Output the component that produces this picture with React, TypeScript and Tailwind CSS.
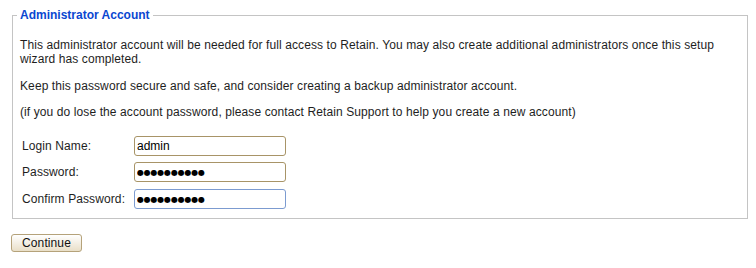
import React from "react";

const fieldRows = [
  { label: "Login Name:", value: "admin", dots: false, focused: false },
  { label: "Password:", value: "●●●●●●●●●●", dots: true, focused: false },
  { label: "Confirm Password:", value: "●●●●●●●●●●", dots: true, focused: true },
];

export default function App() {
  return (
    <div
      className="min-h-screen bg-white pl-3 pt-2 text-[12px] leading-[14px] tracking-[0.1px] text-[#1e1e1e]"
      style={{ fontFamily: '"Liberation Sans", Arial, sans-serif' }}
    >
      {/* Bloc compte administrateur */}
      <fieldset className="w-[736px] border border-[#c4c4c4] pl-[7px] pr-[4px] pt-[16px] pb-[9px]">
        <legend className="ml-[-3px] px-[3px] font-bold text-[#0a47d1] leading-[14px] tracking-normal">
          Administrator Account
        </legend>

        <p>
          This administrator account will be needed for full access to Retain. You may also create additional
          administrators once this setup
          <br />
          wizard has completed.
        </p>
        <p className="mt-[13px]">
          Keep this password secure and safe, and consider creating a backup administrator account.
        </p>
        <p className="mt-[12px]">
          (if you do lose the account password, please contact Retain Support to help you create a new account)
        </p>

        <div className="mt-[17px] flex flex-col gap-[6px]">
          {fieldRows.map((row, i) => (
            <div key={row.label} className={`flex items-center ${i === 2 ? "mt-px" : ""}`}>
              <span className="w-[114px] pl-[2px]">{row.label}</span>
              <input
                type="text"
                defaultValue={row.value}
                readOnly
                className={`h-[20px] w-[152px] rounded-[3px] border bg-white px-[2px] text-black outline-none ${
                  row.focused ? "border-[#7c9bd0]" : "border-[#a89467]"
                } ${row.dots ? "text-[8px] tracking-[-0.2px]" : "text-[12px] tracking-normal"}`}
                style={row.dots ? { fontFamily: '"DejaVu Sans", sans-serif' } : undefined}
              />
            </div>
          ))}
        </div>
      </fieldset>

      <button
        type="button"
        className="ml-[-1px] mt-[15px] h-[18px] w-[71px] rounded-[3px] border border-[#b5a27a] bg-gradient-to-b from-white to-[#e9dfc8] text-[12px] leading-[16px] text-[#111]"
      >
        Continue
      </button>
    </div>
  );
}
